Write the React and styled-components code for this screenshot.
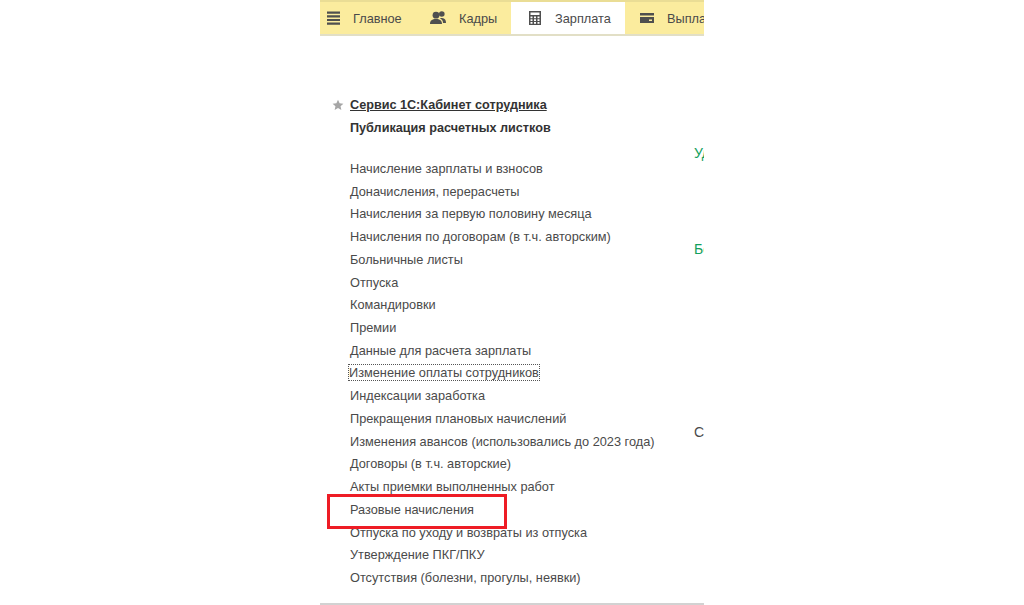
import styled, { createGlobalStyle } from "styled-components";

const GlobalStyle = createGlobalStyle`
  html, body {
    margin: 0;
    padding: 0;
    background: #fff;
  }
`;

const Page = styled.div`
  display: flex;
  justify-content: center;
  width: 1024px;
  height: 605px;
  overflow: hidden;
  background: #fff;
  font-family: "Liberation Sans", Arial, sans-serif;
`;

const Panel = styled.div`
  position: relative;
  display: flex;
  flex-direction: column;
  width: 384px;
  height: 605px;
  overflow: hidden;
`;

const TabBar = styled.div`
  display: flex;
  flex: none;
  height: 36px;
  box-sizing: border-box;
  background: #fbec9e;
  border-top: 2px solid #eadd95;
  border-bottom: 2px solid #e2dfc6;
  white-space: nowrap;
`;

const Tab = styled.div`
  display: flex;
  flex: none;
  align-items: center;
  width: ${(p) => p.$width}px;
  padding-left: ${(p) => p.$pad}px;
  box-sizing: border-box;
  font-size: 12.75px;
  color: #4a4a4a;
  background: ${(p) => (p.$active ? "#fff" : "transparent")};
`;

const TabIcon = styled.svg`
  flex: none;
  width: 16px;
  height: 16px;
  margin-right: ${(p) => p.$gap}px;
  fill: #4f4f4f;
`;

const Body = styled.div`
  display: flex;
  flex: 1;
`;

const Commands = styled.div`
  flex: none;
  width: 374px;
  padding: 58px 0 0 30px;
  box-sizing: border-box;
`;

const Heading = styled.div`
  position: relative;
  height: 23px;
  line-height: 23px;
  font-size: 12.65px;
  font-weight: bold;
  color: #333;
  text-decoration: ${(p) => (p.$link ? "underline" : "none")};
`;

const Star = styled.svg`
  position: absolute;
  left: -18px;
  top: 5px;
  width: 12px;
  height: 12px;
  fill: #a6a6a6;
`;

const List = styled.div`
  display: flex;
  flex-direction: column;
  margin-top: 18px;
`;

const Item = styled.div`
  height: 22.72px;
  line-height: 22.72px;
  font-size: 12.75px;
  color: #4a4a4a;
  white-space: nowrap;
`;

const Focused = styled.span`
  padding: 1px;
  margin-left: -2px;
  outline: 1px dotted #555;
  outline-offset: -1px;
`;

const Side = styled.div`
  flex: none;
  width: 10px;
  padding-top: 107px;
  overflow: hidden;
`;

const SideLabel = styled.div`
  height: ${(p) => p.$height}px;
  font-size: 14px;
  line-height: 20px;
  color: ${(p) => p.$color};
  white-space: nowrap;
`;

const Footer = styled.div`
  position: absolute;
  left: 0;
  right: 0;
  top: 603px;
  height: 2px;
  background: #d2d2d2;
`;

const RedFrame = styled.div`
  position: absolute;
  left: 7px;
  top: 494px;
  width: 180px;
  height: 35px;
  box-sizing: border-box;
  border: 3px solid #ee1c25;
`;

const items = [
  "Начисление зарплаты и взносов",
  "Доначисления, перерасчеты",
  "Начисления за первую половину месяца",
  "Начисления по договорам (в т.ч. авторским)",
  "Больничные листы",
  "Отпуска",
  "Командировки",
  "Премии",
  "Данные для расчета зарплаты",
  "Изменение оплаты сотрудников",
  "Индексации заработка",
  "Прекращения плановых начислений",
  "Изменения авансов (использовались до 2023 года)",
  "Договоры (в т.ч. авторские)",
  "Акты приемки выполненных работ",
  "Разовые начисления",
  "Отпуска по уходу и возвраты из отпуска",
  "Утверждение ПКГ/ПКУ",
  "Отсутствия (болезни, прогулы, неявки)",
];

const App = () => (
  <Page>
    <GlobalStyle />
    <Panel>
      <TabBar>
        <Tab $width={100} $pad={6}>
          <TabIcon viewBox="0 0 16 16" $gap={11}>
            <path d="M1 1.500h13v2.200H1zM1 5.200h13v2.200H1zM1 8.900h13v2.200H1zM1 12.600h13v2.200H1z" />
          </TabIcon>
          Главное
        </Tab>
        <Tab $width={91} $pad={10}>
          <TabIcon viewBox="0 0 16 16" $gap={13}>
            <circle cx="6" cy="5.200" r="3.400" />
            <circle cx="11.800" cy="4" r="2.800" />
            <path d="M0 14c0-3.600 2.200-5 6-5s6 1.400 6 5zM13 13h3c0-3-1-4.800-4-5-1 0-1.600.2-2 .4 2 .6 3 2.400 3 4.600z" />
          </TabIcon>
          Кадры
        </Tab>
        <Tab $active $width={114} $pad={16}>
          <TabIcon viewBox="0 0 16 16" $gap={12}>
            <path
              fillRule="evenodd"
              d="M2 1h12v14H2zM3.500 2.500v2.500h9V2.500zM3.500 6.500v1.800h2v-1.800zM7 6.500v1.800h2v-1.800zM10.500 6.500v1.800h2v-1.800zM3.500 9.300v1.800h2v-1.800zM7 9.300v1.800h2v-1.800zM10.500 9.300v1.800h2v-1.800zM3.500 12v1.800h2V12zM7 12v1.800h2V12zM10.500 12v1.800h2V12z"
            />
          </TabIcon>
          Зарплата
        </Tab>
        <Tab $width={79} $pad={14}>
          <TabIcon viewBox="0 0 16 16" $gap={12}>
            <path fillRule="evenodd" d="M1 3h14v2.500H1zM1 7h14v6H1zM10 9.500v1.500h3V9.500z" />
          </TabIcon>
          Выплаты
        </Tab>
      </TabBar>
      <Body>
        <Commands>
          <Heading $link>
            <Star viewBox="0 0 24 24">
              <path d="M12 1.500l3.200 7 7.600.8-5.700 5.100 1.600 7.500L12 18l-6.700 3.900 1.600-7.500L1.200 9.300l7.600-.8z" />
            </Star>
            Сервис 1С:Кабинет сотрудника
          </Heading>
          <Heading>Публикация расчетных листков</Heading>
          <List>
            {items.map((item, i) => (
              <Item key={item}>{i === 9 ? <Focused>{item}</Focused> : item}</Item>
            ))}
          </List>
        </Commands>
        <Side>
          <SideLabel $height={96} $color="#12a05c">Удержания</SideLabel>
          <SideLabel $height={183} $color="#12a05c">Больничные</SideLabel>
          <SideLabel $height={20} $color="#4a4a4a">Сводные</SideLabel>
        </Side>
      </Body>
      <Footer />
      <RedFrame />
    </Panel>
  </Page>
);

export default App;
